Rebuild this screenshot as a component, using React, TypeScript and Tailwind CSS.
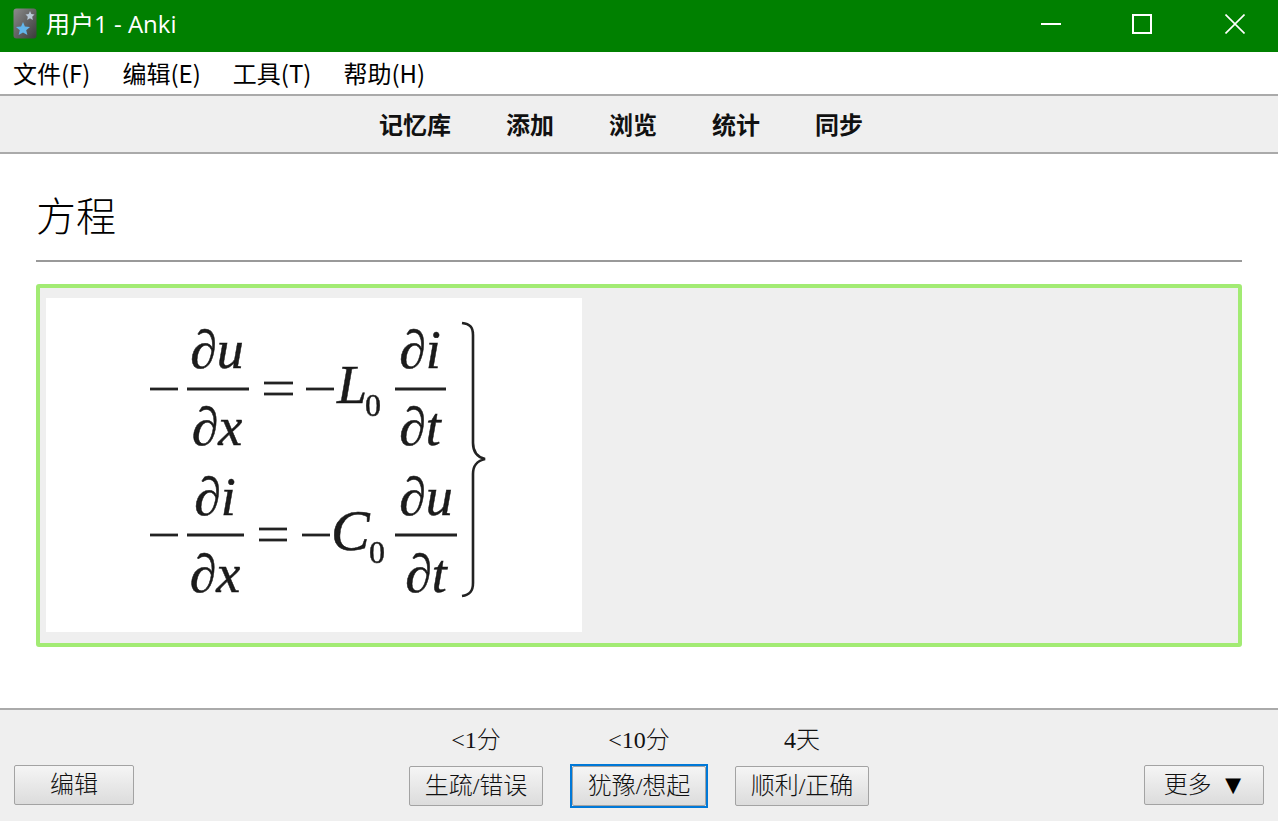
import React from "react";

function AppIcon() {
  return (
    <svg width="24" height="31" viewBox="0 0 24 31" className="mr-[9px]">
      <defs>
        <linearGradient id="ig" x1="0" y1="0" x2="1" y2="1">
          <stop offset="0" stopColor="#8c8c8c" />
          <stop offset="1" stopColor="#3a3a3a" />
        </linearGradient>
        <filter id="iconsoft">
          <feGaussianBlur stdDeviation="0.5" />
        </filter>
      </defs>
      <rect x="0.500" y="0.500" width="23" height="30" rx="3" fill="url(#ig)" />
      <g filter="url(#iconsoft)">
        <polygon points="17,3 18.300,6 21.500,6.500 19.200,8.700 19.800,12 17,10.300 14.200,12 14.800,8.700 12.500,6.500 15.700,6" fill="#b9c9d8" />
        <polygon points="10,14 11.900,18.500 17,19 13.200,22.300 14.400,27 10,24.500 5.600,27 6.800,22.300 3,19 8.100,18.500" fill="#62b5ea" />
      </g>
    </svg>
  );
}

function Frac({ x1, x2, y }: { x1: number; x2: number; y: number }) {
  return <line x1={x1} x2={x2} y1={y} y2={y} stroke="#222" strokeWidth="2.8" />;
}

function MathText({ x, y, size = 54, plain, anchor = "middle", children }: { x: number; y: number; size?: number; plain?: boolean; anchor?: "middle" | "start"; children: React.ReactNode }) {
  return (
    <text
      x={x}
      y={y}
      textAnchor={anchor}
      fontSize={size}
      fontStyle={plain ? "normal" : "italic"}
      stroke="#1a1a1a"
      strokeWidth="0.5"
      className="font-[family-name:'Liberation_Serif',serif] fill-[#1a1a1a]"
    >
      {children}
    </text>
  );
}

function Formula() {
  return (
    <svg width="536" height="334" viewBox="0 0 536 334" className="block bg-white">
      <defs>
        <filter id="soft">
          <feGaussianBlur stdDeviation="0.65" />
        </filter>
      </defs>
      <g filter="url(#soft)">
        <Frac x1={104} x2={132} y={91} />
        <Frac x1={141} x2={203} y={91} />
        <MathText x={171} y={70}>∂u</MathText>
        <MathText x={171} y={147}>∂x</MathText>
        <Frac x1={218} x2={247} y={85} />
        <Frac x1={218} x2={247} y={96} />
        <Frac x1={260} x2={288} y={91} />
        <MathText x={291} y={105} anchor="start">L</MathText>
        <MathText x={319} y={118} size={32} plain anchor="start">0</MathText>
        <Frac x1={349} x2={400} y={91} />
        <MathText x={374} y={70}>∂i</MathText>
        <MathText x={374} y={147}>∂t</MathText>

        <Frac x1={104} x2={132} y={237} />
        <Frac x1={141} x2={198} y={237} />
        <MathText x={169} y={217}>∂i</MathText>
        <MathText x={169} y={294}>∂x</MathText>
        <Frac x1={213} x2={241} y={231} />
        <Frac x1={213} x2={241} y={242} />
        <Frac x1={256} x2={284} y={237} />
        <MathText x={285} y={252} size={58} anchor="start">C</MathText>
        <MathText x={323} y={265} size={32} plain anchor="start">0</MathText>
        <Frac x1={349} x2={411} y={237} />
        <MathText x={380} y={217}>∂u</MathText>
        <MathText x={380} y={294}>∂t</MathText>

        <path
          d="M416 25 C424 26 427 29 427 37 L427 145 C427 154 431 159 439 161 C431 163 427 167 427 176 L427 285 C427 293 424 297 416 298"
          fill="none"
          stroke="#222"
          strokeWidth="2.6"
        />
      </g>
    </svg>
  );
}

function Btn({ children, className }: { children: React.ReactNode; className: string }) {
  return (
    <button
      className={`flex items-center justify-center border border-[#a3a3a3] rounded-[2px] bg-gradient-to-b from-[#f5f5f5] to-[#dcdcdc] text-[#111] text-[24px] font-light font-[family-name:'Liberation_Serif','Noto_Sans_CJK_SC',serif] ${className}`}
    >
      {children}
    </button>
  );
}

export default function App() {
  return (
    <div className="w-[1278px] h-[821px] flex flex-col bg-white overflow-hidden font-[family-name:'Noto_Sans_CJK_SC','Liberation_Sans',sans-serif]">
      <div className="h-[52px] bg-[#008000] flex items-center pl-[13px] pr-[33px] pb-[5px] text-white shrink-0">
        <AppIcon />
        <span className="text-[24px] leading-none font-[family-name:'Open_Sans','Noto_Sans_CJK_SC',sans-serif]">用户1 - Anki</span>
        <div className="ml-auto flex items-center">
          <div className="w-[20px] h-[2px] bg-white mr-[71px]" />
          <div className="w-[20px] h-[20px] border-2 border-white mr-[73px]" />
          <svg width="20" height="20" viewBox="0 0 20 20">
            <path d="M0.500 0.500 L19.500 19.500 M19.500 0.500 L0.500 19.500" stroke="#fff" strokeWidth="1.600" />
          </svg>
        </div>
      </div>

      <div className="h-[42px] flex items-center gap-[32px] pl-[13px] text-[24px] text-black shrink-0">
        <span>文件(F)</span>
        <span>编辑(E)</span>
        <span>工具(T)</span>
        <span>帮助(H)</span>
      </div>

      <div className="h-[60px] shrink-0 bg-[#efefef] border-y-2 border-[#aaaaaa] flex items-center justify-center gap-[55px] pr-[36px] pt-[4px] text-[24px] font-bold text-[#111] font-[family-name:'Liberation_Serif','Noto_Sans_CJK_SC',serif]">
        <span>记忆库</span>
        <span>添加</span>
        <span>浏览</span>
        <span>统计</span>
        <span>同步</span>
      </div>

      <div className="flex-1 px-[36px] min-h-0">
        <div className="h-[108px] border-b-2 border-[#999999] flex items-end pb-[18px]">
          <span className="text-[40px] leading-[48px] font-light text-black font-[family-name:'Liberation_Serif','Noto_Sans_CJK_SC',serif]">方程</span>
        </div>
        <div className="mt-[22px] h-[363px] border-4 border-[#a2eb73] rounded-[3px] bg-[#efefef] pl-[6px] pt-[10px]">
          <Formula />
        </div>
      </div>

      <div className="h-[113px] shrink-0 bg-[#efefef] border-t-2 border-[#aaaaaa] flex items-end justify-between px-[14px] pb-[16px]">
        <Btn className="w-[120px] h-[40px]">编辑</Btn>
        <div className="grid grid-cols-[134px_138px_134px] gap-x-[27px] justify-items-center items-center mb-[-3px] text-[24px] text-[#111] font-[family-name:'Liberation_Serif','Noto_Sans_CJK_SC',serif]">
          <span className="leading-[30px] mb-[9px] font-light">&lt;1分</span>
          <span className="leading-[30px] mb-[9px] font-light">&lt;10分</span>
          <span className="leading-[30px] mb-[9px] font-light">4天</span>
          <Btn className="w-[134px] h-[40px]">生疏/错误</Btn>
          <div className="w-[138px] h-[44px] border-2 border-[#0078d7] flex">
            <Btn className="flex-1">犹豫/想起</Btn>
          </div>
          <Btn className="w-[134px] h-[40px]">顺利/正确</Btn>
        </div>
        <Btn className="w-[120px] h-[40px] gap-[8px] pl-[2px]">
          <span>更多</span>
          <span className="text-[27px] leading-none text-black">▼</span>
        </Btn>
      </div>
    </div>
  );
}
